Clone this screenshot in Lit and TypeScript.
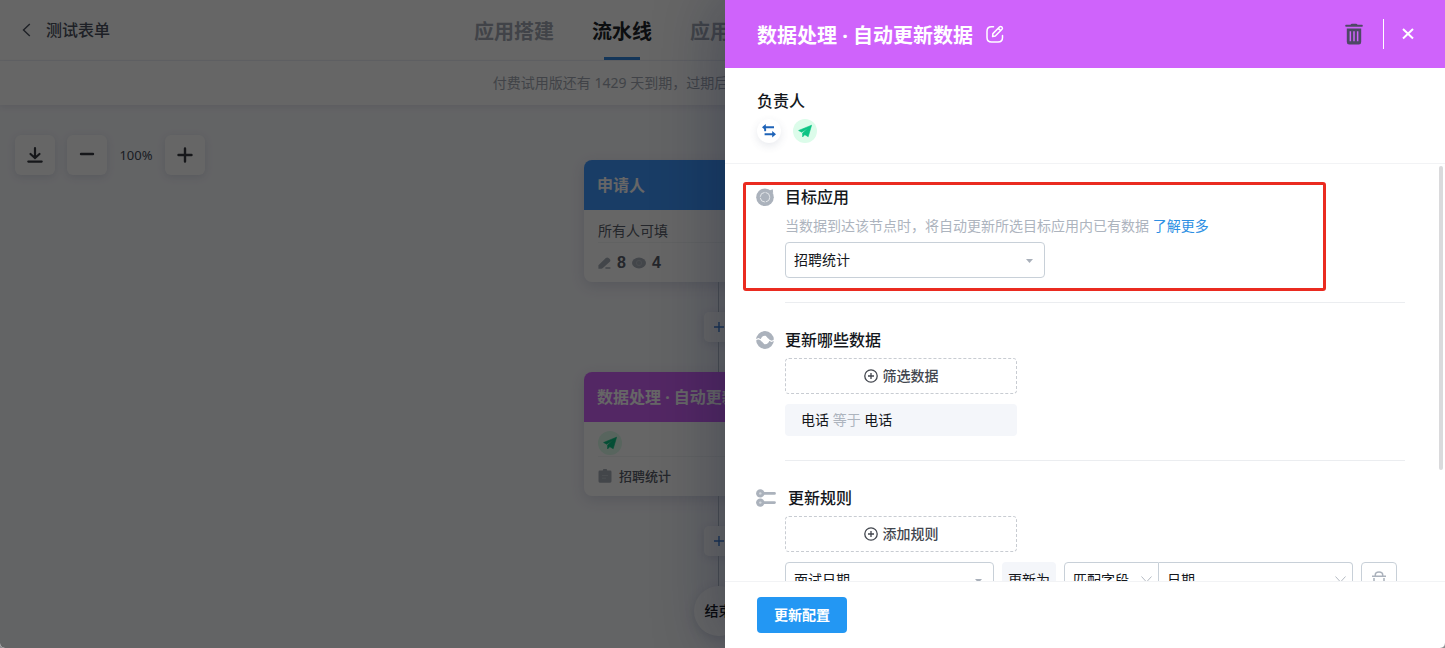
import { LitElement, html, css, svg } from "lit";
import { customElement, property } from "lit/decorators.js";

const base = css`
  *,
  *::before,
  *::after {
    box-sizing: border-box;
  }
  button,
  select {
    font: inherit;
    color: inherit;
    margin: 0;
    padding: 0;
    border: 0;
    background: none;
    cursor: pointer;
  }
  svg {
    display: block;
  }
  h1,
  h2,
  h3,
  p {
    margin: 0;
  }
`;

const planeIcon = (size: number) => html`<svg width=${size} height=${size} viewBox="0 0 24 24" aria-hidden="true">
  <circle cx="12" cy="12" r="12" fill="#dcfcea" />
  <path d="M18.600 6.200 5.600 11.500l3.100 1.700 6-3.700-5.100 4.600v3.800l2.200-2.200 3.400 2z" fill="#0cc484" stroke="#0cc484" stroke-width=".6" stroke-linejoin="round" />
</svg>`;

const trianglePath = svg`<path d="M0 0h7L3.500 4z" fill="#a9b0ba" />`;
const chevronPath = svg`<path d="M.5.5 5.500 6l5-5.500" fill="none" stroke="#b4bac2" />`;

@customElement("flow-canvas")
export class FlowCanvas extends LitElement {
  static styles = [
    base,
    css`
      :host {
        display: block;
        position: relative;
        flex: 1;
        min-height: 0;
        overflow: hidden;
        background: #f8f9fd;
      }
      .tools {
        position: absolute;
        left: 15px;
        top: 30px;
        display: flex;
        align-items: center;
        gap: 12px;
        font-size: 13px;
        color: #444b57;
      }
      .tool {
        display: grid;
        place-items: center;
        width: 40px;
        height: 40px;
        border-radius: 6px;
        background: #fff;
        color: #383b42;
        box-shadow: 0 2px 8px rgba(60, 70, 110, 0.14);
      }
      .zoom {
        width: 34px;
        text-align: center;
      }
      .flow {
        display: flex;
        flex-direction: column;
        align-items: center;
        padding: 55px 8px 0 0;
      }
      .card {
        width: 269px;
        border-radius: 8px;
        background: #fff;
        overflow: hidden;
        box-shadow: 0 4px 14px rgba(60, 70, 110, 0.16);
      }
      .head {
        display: flex;
        align-items: center;
        height: 50px;
        padding: 0 13px;
        font-size: 16px;
        font-weight: 700;
        color: #fff;
        white-space: nowrap;
      }
      .blue {
        background: #4098ff;
      }
      .purple {
        background: #cf63fb;
      }
      .row {
        display: flex;
        align-items: center;
        height: 39px;
        margin: 0 14px;
        gap: 6px;
        font-size: 14px;
        color: #5a606b;
      }
      .row.first {
        height: 33px;
        align-items: flex-end;
        padding-bottom: 1px;
        border-bottom: 1px solid #f3f4f6;
      }
      .row.avatar {
        height: 35px;
      }
      .row.app {
        height: 37px;
        font-size: 13px;
        font-weight: 500;
        gap: 7px;
      }
      .row.app + .space {
        height: 2px;
      }
      .count {
        font: 700 16px/20px "Liberation Sans", sans-serif;
      }
      .line {
        width: 1px;
        height: 30px;
        background: #b9bfca;
      }
      .add {
        display: grid;
        place-items: center;
        width: 29px;
        height: 30px;
        border-radius: 5px;
        background: #fff;
        box-shadow: 0 2px 8px rgba(60, 70, 110, 0.14);
      }
      .end {
        display: grid;
        place-items: center;
        width: 50px;
        height: 50px;
        border-radius: 50%;
        background: #fff;
        font-size: 14px;
        font-weight: 500;
        color: #14171c;
        box-shadow: 0 3px 12px rgba(60, 70, 110, 0.18);
      }
    `,
  ];

  private link() {
    return html`<div class="line"></div>
      <button class="add" aria-label="添加节点">
        <svg width="10" height="10" viewBox="0 0 10 10"><path d="M5 0v10M0 5h10" stroke="#3f7fd0" stroke-width="1.4" /></svg>
      </button>
      <div class="line"></div>`;
  }

  render() {
    return html`
      <div class="flow">
        <article class="card">
          <h3 class="head blue">申请人</h3>
          <div class="row first">所有人可填</div>
          <div class="row">
            <svg width="13" height="12" viewBox="0 0 13 12">
              <path d="M.4 11.800V8.300L7.800 1q1.500-1.200 2.800 0l1.200 1.100q1.200 1.400 0 2.700L4.900 11l-1.300.8z" fill="#a9b0ba" />
              <path d="M7.400 11.100h5" stroke="#a9b0ba" stroke-width="1.500" />
            </svg>
            <span class="count">8</span>
            <svg width="14" height="12" viewBox="0 0 14 12">
              <ellipse cx="7" cy="6" rx="7" ry="5.4" fill="#a9b0ba" />
              <circle cx="7" cy="6" r="2.6" fill="none" stroke="#bcc2ca" />
            </svg>
            <span class="count">4</span>
          </div>
        </article>
        ${this.link()}
        <article class="card">
          <h3 class="head purple">数据处理 · 自动更新数据</h3>
          <div class="row first avatar">${planeIcon(24)}</div>
          <div class="row app">
            <svg width="14" height="14" viewBox="0 0 14 14">
              <path d="M1.8 1.6h3a2.2 2 0 0 1 4.400 0h3q1.300 0 1.300 1.300v9.400q0 1.400-1.300 1.400H1.800Q.5 13.700.5 12.300V2.900q0-1.300 1.300-1.300z" fill="#a9b0ba" />
              <path d="M4 6.500h6M4 9.200h4" stroke="#bcc2ca" />
            </svg>
            <span>招聘统计</span>
          </div>
          <div class="space"></div>
        </article>
        ${this.link()}
        <div class="end">结束</div>
      </div>
      <div class="tools">
        <button class="tool" aria-label="下载">
          <svg width="16" height="16" viewBox="0 0 16 16" fill="none" stroke="currentColor" stroke-width="2.200" stroke-linecap="round">
            <path d="M8 1.200v9.300M3.500 7 8 11l4.500-4M1.300 14.600h13.400" />
          </svg>
        </button>
        <button class="tool" aria-label="缩小">
          <svg width="16" height="16" viewBox="0 0 16 16"><path d="M2 7h12" stroke="currentColor" stroke-width="2.400" stroke-linecap="round" /></svg>
        </button>
        <span class="zoom">100%</span>
        <button class="tool" aria-label="放大">
          <svg width="16" height="16" viewBox="0 0 16 16"><path d="M1.500 8h13M8 1.500v13" stroke="currentColor" stroke-width="2.400" stroke-linecap="round" /></svg>
        </button>
      </div>
    `;
  }
}

@customElement("drop-down")
export class DropDown extends LitElement {
  @property() label = "";
  @property() value = "";
  @property() caret: "triangle" | "chevron" = "triangle";
  @property() side = "";

  static styles = [
    base,
    css`
      :host {
        display: block;
        position: relative;
      }
      .field {
        appearance: none;
        display: block;
        width: 100%;
        height: 36px;
        padding: 0 24px 0 8px;
        border: 1px solid #c8d0d8;
        border-radius: 4px;
        background: #fff;
        color: #14171c;
        font-size: 14px;
        line-height: 20px;
      }
      .left {
        border-radius: 4px 0 0 4px;
        padding-right: 20px;
      }
      .right {
        border-left: 0;
        border-radius: 0 4px 4px 0;
      }
      .triangle,
      .chevron {
        position: absolute;
        pointer-events: none;
      }
      .triangle {
        right: 12px;
        top: 17px;
      }
      .chevron {
        right: 7px;
        top: 14px;
      }
    `,
  ];

  render() {
    const mark =
      this.caret === "triangle"
        ? html`<svg class="triangle" width="7" height="4" viewBox="0 0 7 4">${trianglePath}</svg>`
        : html`<svg class="chevron" width="11" height="7" viewBox="0 0 11 7">${chevronPath}</svg>`;
    return html`<select class="field ${this.side}" aria-label=${this.label}>
        <option>${this.value}</option>
      </select>
      ${mark}`;
  }
}

@customElement("config-drawer")
export class ConfigDrawer extends LitElement {
  static styles = [
    base,
    css`
      :host {
        position: absolute;
        top: 0;
        right: 0;
        bottom: 0;
        width: 720px;
        max-width: 100%;
        display: flex;
        flex-direction: column;
        background: #fff;
        box-shadow: -8px 0 60px rgba(10, 20, 50, 0.3);
        color: #14171c;
      }
      .top {
        display: flex;
        align-items: center;
        flex: none;
        height: 68px;
        padding: 0 28px 0 32px;
        background: #cf63fb;
        color: #fff;
      }
      .title {
        padding-top: 3px;
        font-size: 20px;
        line-height: 28px;
        font-weight: 700;
      }
      .edit {
        margin-left: 13px;
      }
      .delete {
        margin-left: auto;
        color: #4e4866;
      }
      .rule {
        width: 1px;
        height: 30px;
        margin: 0 15px 0 20px;
        background: #fff;
      }
      .close {
        display: grid;
        place-items: center;
        width: 18px;
        height: 20px;
      }
      .owner {
        flex: none;
        padding: 21px 32px 20px;
        border-bottom: 1px solid #f2f3f5;
      }
      .label {
        font-size: 16px;
        line-height: 24px;
        font-weight: 500;
      }
      .people {
        display: flex;
        gap: 12px;
        margin-top: 6px;
      }
      .swap {
        display: grid;
        place-items: center;
        width: 24px;
        height: 24px;
        border-radius: 50%;
        box-shadow: 0 3px 8px rgba(60, 70, 110, 0.12);
      }
      .main {
        flex: 1;
        min-height: 0;
        position: relative;
        display: flex;
      }
      .scroll {
        flex: 1;
        min-width: 0;
        overflow-y: auto;
        scrollbar-width: none;
      }
      .bar {
        position: absolute;
        right: 2px;
        top: 2px;
        width: 4px;
        height: 73%;
        border-radius: 2px;
        background: #dadadc;
      }
      .section {
        position: relative;
        display: grid;
        grid-template-columns: 29px minmax(0, 1fr);
        padding: 25px 40px 0 31px;
      }
      .section.lead {
        padding-top: 21px;
      }
      .section .icon {
        padding-top: 3px;
      }
      .content {
        padding-bottom: 24px;
        border-bottom: 1px solid #ebedf0;
      }
      .content .label {
        margin-bottom: 6px;
      }
      .content .label.wide {
        padding-left: 3px;
      }
      .hint {
        font-size: 14px;
        line-height: 21px;
        margin-bottom: 6px;
        color: #adb4be;
      }
      .more {
        color: #2c8fe3;
        text-decoration: none;
      }
      .target {
        width: 260px;
      }
      .dashed {
        display: flex;
        align-items: center;
        justify-content: center;
        gap: 5px;
        width: 232px;
        height: 36px;
        border: 1px dashed #c8ccd2;
        border-radius: 4px;
        font-size: 14px;
        font-weight: 500;
        color: #42464e;
      }
      .chip {
        width: 232px;
        margin-top: 10px;
        padding: 0 16px;
        border-radius: 4px;
        background: #f4f6fa;
        font-size: 14px;
        line-height: 32px;
      }
      .muted {
        color: #adb4be;
      }
      .frame {
        position: absolute;
        left: 18px;
        right: 119px;
        top: 18px;
        bottom: 12px;
        border: 3px solid #ea2b20;
        border-radius: 3px;
        pointer-events: none;
      }
      .set {
        display: flex;
        gap: 8px;
        margin-top: 10px;
      }
      .source {
        width: 209px;
      }
      .tag {
        width: 54px;
        border-radius: 4px;
        background: #f4f6fa;
        font-size: 14px;
        line-height: 36px;
        text-align: center;
      }
      .pair {
        display: flex;
        flex: 1;
        min-width: 0;
      }
      .mode {
        width: 95px;
      }
      .match {
        flex: 1;
      }
      .remove {
        display: grid;
        place-items: center;
        width: 36px;
        height: 36px;
        margin-right: 8px;
        border: 1px solid #c8d0d8;
        border-radius: 4px;
      }
      .foot {
        flex: none;
        padding: 15px 32px;
        border-top: 1px solid #f2f3f5;
      }
      .save {
        display: block;
        width: 90px;
        height: 36px;
        border-radius: 4px;
        background: #2397f3;
        color: #fff;
        font-size: 14px;
        font-weight: 700;
      }
    `,
  ];

  private plus() {
    return html`<svg width="14" height="14" viewBox="0 0 14 14" fill="none" stroke="#42464e" stroke-width="1.300">
      <circle cx="7" cy="7" r="6.200" />
      <path d="M7 4v6M4 7h6" />
    </svg>`;
  }

  render() {
    return html`
      <header class="top">
        <h1 class="title">数据处理 · 自动更新数据</h1>
        <button class="edit" aria-label="编辑名称">
          <svg width="18" height="18" viewBox="0 0 18 18" fill="none" stroke="#fff" stroke-width="1.500" stroke-linecap="round" stroke-linejoin="round">
            <path d="M7.500 1.800H5.500Q1 1.800 1 6.300v6.200Q1 17 5.500 17h6.500q4.500 0 4.500-4.500v-2" />
            <path d="m6.600 11.600.3-3L13.700 1.800q1-.8 2 .1l.3.3q.9 1 0 2L9.300 11zM12.300 3.300l2.300 2.300" />
          </svg>
        </button>
        <button class="delete" aria-label="删除">
          <svg width="18" height="22" viewBox="0 0 18 22">
            <path d="M5.500 1.800Q5.900.8 7 .8h4q1.100 0 1.500 1H17q.8 0 .8 1t-.8.900H1q-.8 0-.8-.9t.8-1z" fill="currentColor" />
            <path d="M1.800 5.400h14.400v13.600q0 2.500-2.400 2.500H4.200q-2.400 0-2.400-2.500zM4.600 8.300v10h1.500v-10zM8.250 8.300v10h1.500v-10zM11.900 8.300v10h1.500v-10z" fill="currentColor" fill-rule="evenodd" />
          </svg>
        </button>
        <span class="rule"></span>
        <button class="close" aria-label="关闭">
          <svg width="12" height="12" viewBox="0 0 12 12"><path d="m1 1 10 9.500M11 1 1 10.500" stroke="#fff" stroke-width="2" /></svg>
        </button>
      </header>

      <section class="owner">
        <h2 class="label">负责人</h2>
        <div class="people">
          <button class="swap" aria-label="切换负责人">
            <svg width="14" height="14" viewBox="0 0 14 14">
              <path d="M3.800 0v2.300H12v2H3.800v2.300L0 3.300zM10.200 7v2.300H2.600v2h7.600v2.300l3.800-3.300z" fill="#1e63b8" />
              <path d="M2.200 4.500h1.900v2.700H2.200z" fill="#1e63b8" />
            </svg>
          </button>
          ${planeIcon(24)}
        </div>
      </section>

      <div class="main">
        <div class="scroll">
          <section class="section lead">
            <div class="icon">
              <svg width="18" height="18" viewBox="0 0 18 18">
                <circle cx="9" cy="9.200" r="8.800" fill="#abb2bc" />
                <path d="M13.500 2.500 16.800 1.200 17.200 5.500z" fill="#abb2bc" />
                <circle cx="9" cy="9.200" r="4.800" fill="none" stroke="#e4e7ea" stroke-width="1" stroke-dasharray="6.500 1.040" />
              </svg>
            </div>
            <div class="content">
              <h2 class="label">目标应用</h2>
              <p class="hint">当数据到达该节点时，将自动更新所选目标应用内已有数据 <a class="more" href="#">了解更多</a></p>
              <drop-down class="target" label="目标应用" value="招聘统计"></drop-down>
            </div>
            <div class="frame"></div>
          </section>

          <section class="section">
            <div class="icon">
              <svg width="18" height="18" viewBox="0 0 18 18">
                <circle cx="9" cy="9" r="6.600" fill="none" stroke="#abb2bc" stroke-width="4.600" />
                <path d="M9.500 4.500h5l-2 3.500zM8.500 13.500h-5l2-3.500z" fill="#abb2bc" />
                <path d="M-.5 9.200 2.300 7.600 5.500 9M18.500 8.800l-2.800 1.600L12.500 9" fill="none" stroke="#fff" stroke-width="1.200" />
              </svg>
            </div>
            <div class="content">
              <h2 class="label">更新哪些数据</h2>
              <button class="dashed">${this.plus()}筛选数据</button>
              <div class="chip">电话 <span class="muted">等于</span> 电话</div>
            </div>
          </section>

          <section class="section">
            <div class="icon">
              <svg width="20" height="18" viewBox="0 0 20 18">
                <g fill="#abb2bc">
                  <circle cx="4.300" cy="4.400" r="4.200" />
                  <circle cx="4.300" cy="13.600" r="4.200" />
                </g>
                <path d="M7 4.400h11.500M7 13.600h11.500" stroke="#abb2bc" stroke-width="2.800" stroke-linecap="round" />
                <circle cx="4.300" cy="4.400" r="1.200" fill="#d5d9de" />
                <circle cx="4.300" cy="13.600" r="1.200" fill="#d5d9de" />
              </svg>
            </div>
            <div class="content">
              <h2 class="label wide">更新规则</h2>
              <button class="dashed">${this.plus()}添加规则</button>
              <div class="set">
                <drop-down class="source" label="更新字段" value="面试日期"></drop-down>
                <span class="tag">更新为</span>
                <div class="pair">
                  <drop-down class="mode" side="left" caret="chevron" label="匹配方式" value="匹配字段"></drop-down>
                  <drop-down class="match" side="right" caret="chevron" label="匹配字段" value="日期"></drop-down>
                </div>
                <button class="remove" aria-label="删除规则">
                  <svg width="14" height="18" viewBox="0 0 14 18" fill="none" stroke="#abb2bc" stroke-width="1.500">
                    <path d="M0 5.300h14M3.300 5V4q0-3 3.700-3t3.700 3v1M2 7V16.500h10V7M5.500 10v4M8.500 10v4" />
                  </svg>
                </button>
              </div>
            </div>
          </section>
        </div>
        <div class="bar"></div>
      </div>

      <footer class="foot"><button class="save">更新配置</button></footer>
    `;
  }
}

@customElement("app-root")
export class AppRoot extends LitElement {
  static styles = [
    base,
    css`
      :host {
        display: block;
        height: 100vh;
        font-family: "Noto Sans", "Noto Sans CJK SC", "Microsoft YaHei", sans-serif;
        font-size: 14px;
        line-height: 20px;
        background: #8f8f92;
      }
      .page {
        position: relative;
        display: flex;
        flex-direction: column;
        height: 100%;
        overflow: hidden;
        border-radius: 0 0 5px 5px;
        background: #fff;
      }
      .bar {
        position: relative;
        display: flex;
        align-items: center;
        flex: none;
        height: 61px;
        padding: 0 22px;
        border-bottom: 1px solid #f0f2f8;
      }
      .back {
        position: absolute;
        display: flex;
        align-items: center;
        gap: 15px;
        font-size: 16px;
        font-weight: 500;
        color: #4c5260;
      }
      .tabs {
        display: flex;
        gap: 38px;
        width: 497px;
        height: 60px;
        margin: 0 auto;
        font-size: 20px;
        font-weight: 700;
      }
      .tab {
        position: relative;
        display: flex;
        align-items: center;
        padding-top: 3px;
        color: #a3a9b3;
        text-decoration: none;
        white-space: nowrap;
      }
      .tab.on {
        color: #202329;
      }
      .tab.on::after {
        content: "";
        position: absolute;
        left: 12px;
        right: 12px;
        bottom: 0;
        height: 3px;
        background: #3388e0;
      }
      .notice {
        flex: none;
        line-height: 44px;
        text-align: center;
        color: #a3a9b3;
        box-shadow: 0 2px 6px rgba(60, 70, 110, 0.1);
        position: relative;
        z-index: 1;
      }
      .mask {
        position: absolute;
        inset: 0;
        z-index: 2;
        background: rgba(0, 0, 0, 0.6);
      }
      .drawer {
        z-index: 3;
      }
    `,
  ];

  render() {
    return html`
      <div class="page">
        <header class="bar">
          <button class="back">
            <svg width="9" height="14" viewBox="0 0 9 14"><path d="M7.800 1 1.500 7l6.300 6" fill="none" stroke="currentColor" stroke-width="1.400" /></svg>
            测试表单
          </button>
          <nav class="tabs">
            <a class="tab" href="#">应用搭建</a>
            <a class="tab on" href="#">流水线</a>
            <a class="tab" href="#">应用发布</a>
          </nav>
        </header>
        <div class="notice">付费试用版还有 1429 天到期，过期后将无法正常使用，请尽快联系顾问。</div>
        <flow-canvas></flow-canvas>
        <div class="mask"></div>
        <config-drawer class="drawer"></config-drawer>
      </div>
    `;
  }
}
